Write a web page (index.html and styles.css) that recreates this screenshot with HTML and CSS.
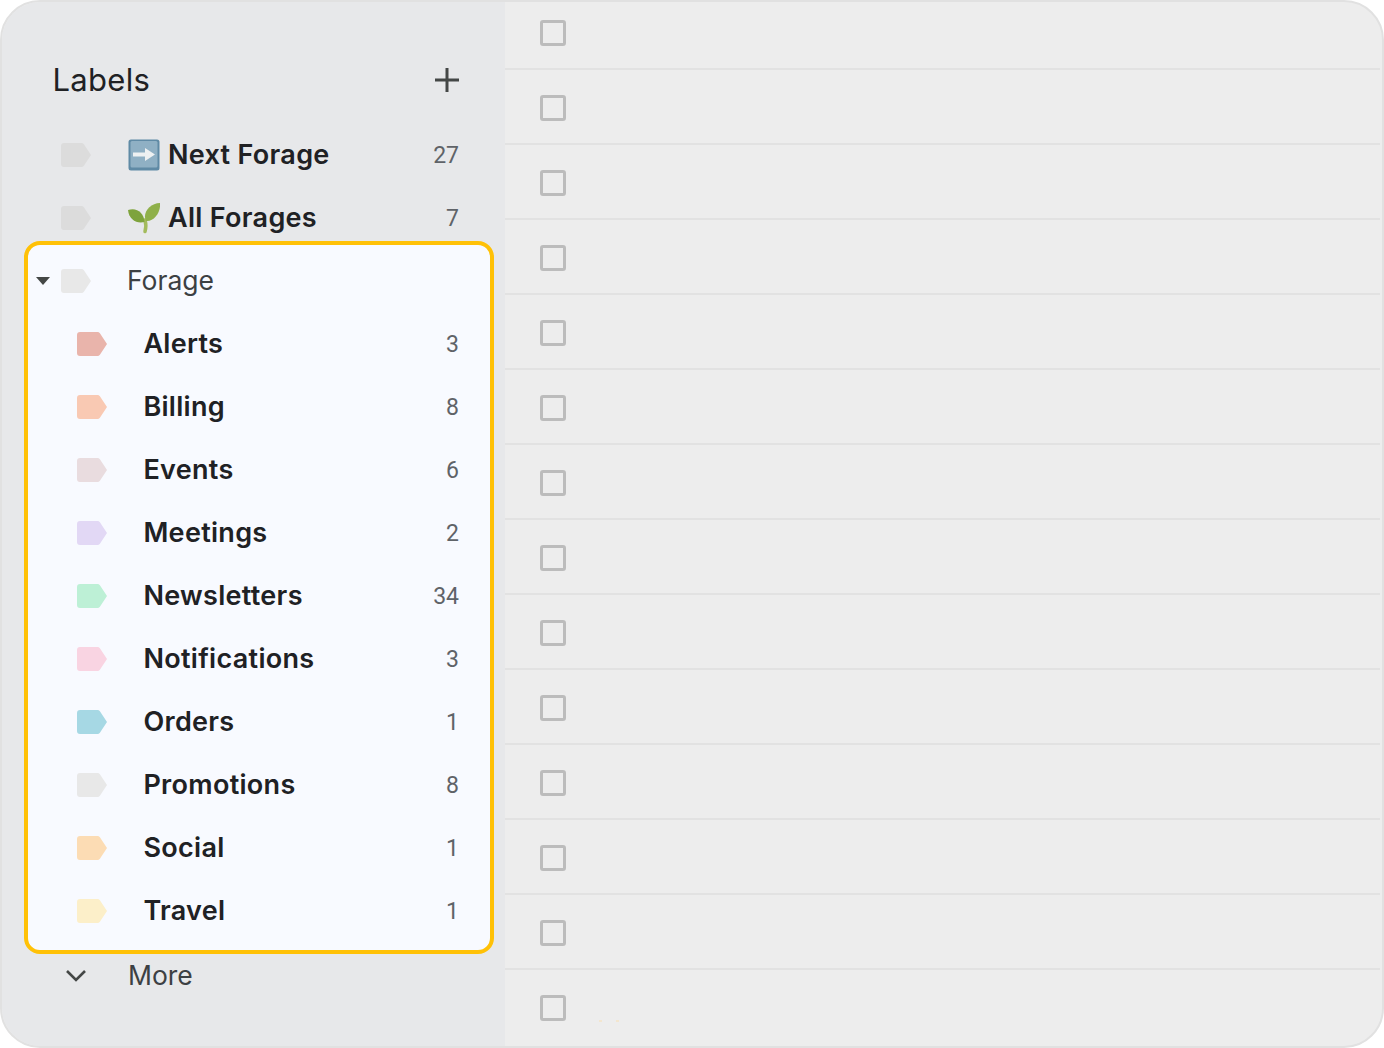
FILE: index.html
```html
<!DOCTYPE html>
<html lang="en">
<head>
  <meta charset="UTF-8" />
  <title>Labels</title>
  <link rel="stylesheet" href="styles.css">
</head>
<body>
  <svg class="defs" width="0" height="0">
    <symbol id="tag" viewBox="0 0 30 24">
      <path d="M3 0H20.5a3 3 0 0 1 2.4 1.2L30 12L22.9 22.8a3 3 0 0 1-2.4 1.2H3a3 3 0 0 1-3-3V3a3 3 0 0 1 3-3z"/>
    </symbol>
  </svg>

  <div class="frame">
    <aside class="sidebar">
      <div class="sidebar-head">
        <h2>Labels</h2>
        <svg class="plus" width="26" height="26" viewBox="0 0 26 26"><path d="M13 1V25M1 13H25"/></svg>
      </div>

      <div class="row">
        <svg class="tag tag-grey"><use href="#tag"/></svg>
        <svg class="emoji" viewBox="0 0 32 32">
          <rect x="0.5" y="0.5" width="31" height="31" rx="2.5" fill="#5f8aa5"/>
          <rect x="2.5" y="2" width="27" height="26.500" rx="1.5" fill="#8fb0c4"/>
          <path d="M5 13.500H17V9L27 15.500L17 22V17.500H5z" fill="#eef1f2"/>
        </svg>
        <span class="name">Next Forage</span>
        <span class="count">27</span>
      </div>
      <div class="row">
        <svg class="tag tag-grey"><use href="#tag"/></svg>
        <svg class="emoji" viewBox="0 0 32 32">
          <path d="M17 18C18.200 22 18 26 17 29.500" fill="none" stroke="#a3bb5c" stroke-width="3.500" stroke-linecap="round"/>
          <path d="M0 8C8 5 16 10 16.500 20C9 22 1 18 0 8z" fill="#7ea33c"/>
          <path d="M32 1C33 10 26 20 18 19C14 11 22 1 32 1z" fill="#8fb04a"/>
        </svg>
        <span class="name">All Forages</span>
        <span class="count">7</span>
      </div>

      <div class="box">
        <div class="row row-parent">
          <span class="caret"></span>
          <svg class="tag tag-light"><use href="#tag"/></svg>
          <span class="name name-plain">Forage</span>
        </div>
        <div class="row row-child"><svg class="tag tag-alerts"><use href="#tag"/></svg><span class="name">Alerts</span><span class="count">3</span></div>
        <div class="row row-child"><svg class="tag tag-billing"><use href="#tag"/></svg><span class="name">Billing</span><span class="count">8</span></div>
        <div class="row row-child"><svg class="tag tag-events"><use href="#tag"/></svg><span class="name">Events</span><span class="count">6</span></div>
        <div class="row row-child"><svg class="tag tag-meetings"><use href="#tag"/></svg><span class="name">Meetings</span><span class="count">2</span></div>
        <div class="row row-child"><svg class="tag tag-news"><use href="#tag"/></svg><span class="name">Newsletters</span><span class="count">34</span></div>
        <div class="row row-child"><svg class="tag tag-notif"><use href="#tag"/></svg><span class="name">Notifications</span><span class="count">3</span></div>
        <div class="row row-child"><svg class="tag tag-orders"><use href="#tag"/></svg><span class="name">Orders</span><span class="count">1</span></div>
        <div class="row row-child"><svg class="tag tag-light"><use href="#tag"/></svg><span class="name">Promotions</span><span class="count">8</span></div>
        <div class="row row-child"><svg class="tag tag-social"><use href="#tag"/></svg><span class="name">Social</span><span class="count">1</span></div>
        <div class="row row-child"><svg class="tag tag-travel"><use href="#tag"/></svg><span class="name">Travel</span><span class="count">1</span></div>
      </div>

      <div class="row row-more">
        <svg class="chevron" width="30" height="14" viewBox="0 0 30 14"><path d="M6 2L15 11L24 2"/></svg>
        <span class="name name-plain">More</span>
      </div>
    </aside>

    <main class="mail-list">
      <div class="mail-row"><span class="check"></span></div>
      <div class="mail-row"><span class="check"></span></div>
      <div class="mail-row"><span class="check"></span></div>
      <div class="mail-row"><span class="check"></span></div>
      <div class="mail-row"><span class="check"></span></div>
      <div class="mail-row"><span class="check"></span></div>
      <div class="mail-row"><span class="check"></span></div>
      <div class="mail-row"><span class="check"></span></div>
      <div class="mail-row"><span class="check"></span></div>
      <div class="mail-row"><span class="check"></span></div>
      <div class="mail-row"><span class="check"></span></div>
      <div class="mail-row"><span class="check"></span></div>
      <div class="mail-row"><span class="check"></span></div>
      <div class="mail-row mail-row-last">
        <span class="check"></span>
        <span class="dots"><i></i><i></i></span>
      </div>
    </main>
  </div>
</body>
</html>
```

FILE: styles.css
```css
html, body {
  margin: 0;
  height: 100%;
  background-color: #fff;
}

.defs {
  display: block;
  height: 0;
}

.frame {
  box-sizing: border-box;
  width: 1384px;
  height: 1048px;
  display: flex;
  overflow: hidden;
  background-color: #ededed;
  border: 2px solid #e1e1e1;
  border-radius: 40px;
  font-family: Inter, "Noto Sans", sans-serif;
  color: #202124;
}

/* left column */
.sidebar {
  box-sizing: border-box;
  width: 503px;
  flex: none;
  padding: 0 11px 0 22px;
  background-color: #e7e8ea;
}

.sidebar-head {
  height: 61px;
  padding: 47px 34px 13px 29px;
  display: flex;
  align-items: center;
  justify-content: space-between;
}

.sidebar-head h2 {
  margin: 0 0 0 -0.5px;
  font-size: 31px;
  font-weight: 400;
  letter-spacing: 0.3px;
}

.plus {
  fill: none;
  stroke: #444746;
  stroke-width: 3;
}

.row {
  height: 63px;
  display: flex;
  align-items: center;
  padding: 0 35px 0 37px;
}

.tag {
  width: 30px;
  height: 24px;
  flex: none;
  margin-right: 37px;
  fill: currentColor;
}

.tag-grey { color: #dcdcdc; }
.tag-light { color: #e8e8e8; }
.tag-alerts { color: #e9b4ab; }
.tag-billing { color: #f9c9b3; }
.tag-events { color: #e9dcdf; }
.tag-meetings { color: #e2d8f5; }
.tag-news { color: #bdf0d6; }
.tag-notif { color: #f9d4e2; }
.tag-orders { color: #a6d8e4; }
.tag-social { color: #fcdcb4; }
.tag-travel { color: #fcefc9; }

.emoji {
  width: 32px;
  height: 32px;
  flex: none;
  margin-right: 8px;
}

.name {
  flex: 1;
  font-size: 27px;
  font-weight: 600;
  letter-spacing: 0.3px;
  white-space: nowrap;
}

.name-plain {
  margin-left: -1px;
  padding-bottom: 2px;
  font-size: 26.5px;
  font-weight: 400;
  letter-spacing: 0;
  color: #3c4043;
}

.count {
  padding-top: 2px;
  font-family: Roboto, sans-serif;
  font-size: 23px;
  color: #5f6368;
}

/* highlighted group */
.box {
  height: 701px;
  margin-top: -8px;
  border: 4px solid #ffc107;
  border-radius: 16px;
  background-color: #f8faff;
  padding-top: 4px;
}

.row-parent {
  padding: 0 31px 0 8px;
}

.caret {
  width: 0;
  height: 0;
  flex: none;
  margin-right: 11px;
  border-left: 7px solid transparent;
  border-right: 7px solid transparent;
  border-top: 8px solid #444746;
}

.row-child {
  padding: 0 31px 0 49px;
}

.row-child .name {
  margin-left: -0.6px;
}

.row-more {
  height: 43px;
  padding-left: 37px;
}

.chevron {
  flex: none;
  margin-right: 38px;
  fill: none;
  stroke: #444746;
  stroke-width: 2.600;
}

/* right column */
.mail-list {
  flex: 1;
  min-width: 0;
}

.mail-row {
  box-sizing: border-box;
  height: 75px;
  margin-right: 2px;
  padding: 25px 0 0 35px;
  border-bottom: 2px solid #e2e2e2;
}

.mail-row:first-child {
  height: 68px;
  padding-top: 18px;
}

.mail-row-last {
  border-bottom: none;
  display: flex;
}

.check {
  box-sizing: border-box;
  display: block;
  width: 26px;
  height: 26px;
  flex: none;
  border: 3px solid #bcbcbc;
  border-radius: 3px;
}

.dots {
  display: flex;
  gap: 14px;
  margin: 25px 0 0 33px;
}

.dots i {
  width: 3px;
  height: 2px;
  background-color: #f3e6cf;
}
```
